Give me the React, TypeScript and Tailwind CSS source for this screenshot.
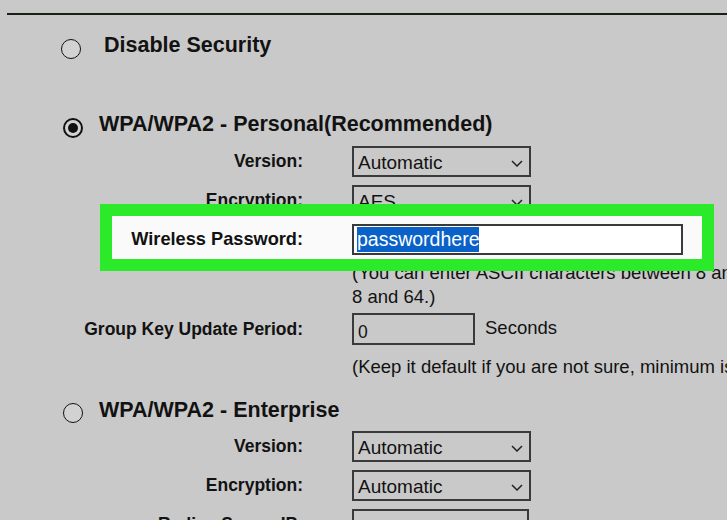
const Chevron = () => (
  <svg width="12" height="7" viewBox="0 0 12 7">
    <path d="M1 1l5 5 5-5" fill="none" stroke="#222" strokeWidth="1.5" />
  </svg>
);

const Select = ({ value }: { value: string }) => (
  <div className="flex h-[31px] w-[179px] items-center justify-between border-2 border-[#3a3a3a] pl-[4px] pr-[6px] pt-[4px] text-[19px]">
    <span>{value}</span>
    <Chevron />
  </div>
);

const Radio = ({ checked, className }: { checked?: boolean; className: string }) => (
  <div
    className={
      checked
        ? `flex h-[20px] w-[20px] shrink-0 items-center justify-center rounded-full border-2 border-[#111] bg-[#d2d2d2] ${className}`
        : `h-[20px] w-[20px] shrink-0 rounded-full border-[1.5px] border-[#111] bg-[#d2d2d2] ${className}`
    }
  >
    {checked && <div className="h-[10px] w-[10px] rounded-full bg-[#111]" />}
  </div>
);

const Field = ({ label, children }: { label: string; children: React.ReactNode }) => (
  <div className="flex h-[39px] shrink-0 items-center">
    <div className="w-[303px] shrink-0 text-right text-[17.5px] font-bold">{label}</div>
    <div className="ml-[49px] flex items-center">{children}</div>
  </div>
);

export default function App() {
  return (
    <div className="flex h-[520px] w-[727px] flex-col overflow-hidden bg-[#c9c9c9] font-['Liberation_Sans',Arial,sans-serif] text-[#121212]">
      <div className="ml-[7px] mt-[13px] h-[2px] shrink-0 bg-[#182018]" />

      <div className="mt-[10px] flex h-[40px] shrink-0 items-center">
        <Radio className="ml-[61px] mt-[8px]" />
        <span className="ml-[23px] text-[21.5px] font-bold">Disable Security</span>
      </div>

      <div className="mt-[41px] flex h-[36px] shrink-0 items-center">
        <Radio checked className="ml-[63px] mt-[7px]" />
        <span className="ml-[16px] text-[21.5px] font-bold">WPA/WPA2 - Personal(Recommended)</span>
      </div>

      <Field label="Version:">
        <Select value="Automatic" />
      </Field>
      <Field label="Encryption:">
        <Select value="AES" />
      </Field>

      {/* highlighted row sits over its neighbours */}
      <div className="relative z-10 -mb-[12px] -mt-[16px] ml-[100px] w-[614px] shrink-0 border-[12px] border-[#2aea2a] bg-[#fafafa]">
        <div className="flex h-[43px] items-center pt-[4px]">
          <div className="w-[191px] shrink-0 text-right text-[18.2px] font-bold">Wireless Password:</div>
          <div className="ml-[49px] flex h-[31px] w-[331px] items-center border-2 border-[#3a3a3a] bg-white pl-[3px]">
            <span className="inline-block h-[25px] bg-[#0a62c9] text-[19.5px] leading-[25px] text-white">passwordhere</span>
          </div>
        </div>
      </div>

      <div className="ml-[352px] mt-[2px] shrink-0 whitespace-nowrap text-[18.5px] leading-[24px]">
        (You can enter ASCII characters between 8 and
        <br />8 and 64.)
      </div>

      <div className="mt-[4px] flex h-[32px] shrink-0 items-center">
        <div className="w-[303px] shrink-0 text-right text-[17.5px] font-bold">Group Key Update Period:</div>
        <div className="ml-[49px] flex h-[32px] w-[123px] items-center border-2 border-[#3a3a3a] pl-[4px] pt-[6px] text-[17.5px]">
          0
        </div>
        <span className="mb-[3px] ml-[10px] text-[18.5px]">Seconds</span>
      </div>

      <div className="ml-[352px] mt-[12px] shrink-0 whitespace-nowrap text-[18.5px] leading-[20px]">
        (Keep it default if you are not sure, minimum is 30, 0 means no update)
      </div>

      <div className="mt-[16px] flex h-[34px] shrink-0 items-center">
        <Radio className="ml-[63px] mt-[6px]" />
        <span className="ml-[16px] text-[21.5px] font-bold">WPA/WPA2 - Enterprise</span>
      </div>

      <Field label="Version:">
        <Select value="Automatic" />
      </Field>
      <Field label="Encryption:">
        <Select value="Automatic" />
      </Field>
      <Field label="Radius Server IP:">
        <div className="h-[31px] w-[177px] border-2 border-[#3a3a3a]" />
      </Field>
    </div>
  );
}
